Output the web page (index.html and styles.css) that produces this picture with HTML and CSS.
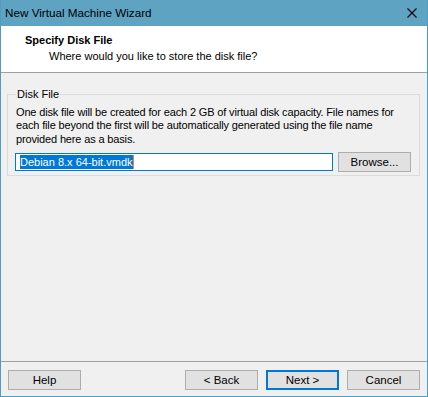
FILE: index.html
```html
<!DOCTYPE html>
<html lang="en">
<head>
  <meta charset="UTF-8">
  <title>New Virtual Machine Wizard</title>
  <link rel="stylesheet" href="styles.css">
</head>
<body>
  <div class="window">
    <div class="titlebar">
      <span class="title">New Virtual Machine Wizard</span>
      <span class="close-button">
        <svg width="10" height="10" viewBox="0 0 10 10"><path d="M0.5 0.5 L9.5 9.5 M9.5 0.5 L0.5 9.5" stroke="#000" stroke-width="1.1" fill="none"/></svg>
      </span>
    </div>
    <div class="header">
      <div class="header-title">Specify Disk File</div>
      <div class="header-sub">Where would you like to store the disk file?</div>
    </div>
    <div class="content">
      <fieldset class="group">
        <legend>Disk File</legend>
        <p>One disk file will be created for each 2 GB of virtual disk capacity. File names for<br>each file beyond the first will be automatically generated using the file name<br>provided here as a basis.</p>
        <div class="file-row">
          <div class="file-input"><span class="selected">Debian 8.x 64-bit.vmdk</span><span class="caret"></span></div>
          <button class="btn browse">Browse...</button>
        </div>
      </fieldset>
    </div>
    <div class="footer">
      <button class="btn">Help</button>
      <div class="nav-buttons">
        <button class="btn">&lt; Back</button>
        <button class="btn default">Next &gt;</button>
        <button class="btn">Cancel</button>
      </div>
    </div>
  </div>
</body>
</html>
```

FILE: styles.css
```css
body {
  margin: 0;
  font-family: 'Liberation Sans', Arial, sans-serif;
  font-size: 11px;
  color: #000000;
}
.window {
  width: 428px;
  height: 397px;
  box-sizing: border-box;
  border: 1px solid #4f9cc3;
  border-top: none;
  display: flex;
  flex-direction: column;
  background-color: #f0f0f0;
}
.titlebar {
  height: 26px;
  background-color: #5fa3c2;
  display: flex;
  align-items: center;
  justify-content: space-between;
  padding-left: 4px;
}
.title {
  font-size: 11.7px;
  line-height: 16px;
}
.close-button {
  width: 30px;
  display: flex;
  justify-content: center;
  align-items: center;
}
.header {
  height: 40px;
  background-color: #ffffff;
  border-bottom: 1px solid #a0a0a0;
  padding: 6px 0 0 24px;
}
.header-title {
  font-weight: bold;
  line-height: 16px;
}
.header-sub {
  padding-left: 24px;
  line-height: 16px;
}
.content {
  flex: 1;
  padding: 0 7px 0 6px;
}
.group {
  margin: 13px 0 0 0;
  padding: 0 8px 3px 7px;
  border: 1px solid #dcdcdc;
  min-width: 0;
}
.group legend {
  padding: 0 1px;
  margin-left: 1px;
  line-height: 16px;
}
.group p {
  margin: 4px 0 0 1px;
  line-height: 13.3px;
  letter-spacing: -0.15px;
}
.file-row {
  display: flex;
  align-items: center;
  gap: 5px;
  margin-top: 6px;
}
.file-input {
  flex: 1;
  height: 18px;
  box-sizing: border-box;
  border: 1px solid #0078d7;
  background-color: #ffffff;
  padding-left: 4px;
  display: flex;
  align-items: center;
}
.selected {
  background-color: #0078d7;
  color: #ffffff;
  line-height: 14px;
}
.caret {
  width: 1px;
  height: 14px;
  background-color: #f08a24;
}
.btn {
  width: 73px;
  height: 20px;
  box-sizing: border-box;
  border: 1px solid #adadad;
  background-color: #e1e1e1;
  font-family: 'Liberation Sans', Arial, sans-serif;
  font-size: 11.5px;
  color: #000000;
  padding: 0;
}
.btn.default {
  border: 2px solid #0078d7;
}
.footer {
  border-top: 1px solid #a0a0a0;
  padding: 8px 7px 6px 7px;
  display: flex;
  justify-content: space-between;
}
.nav-buttons {
  display: flex;
  gap: 8px;
}
```
